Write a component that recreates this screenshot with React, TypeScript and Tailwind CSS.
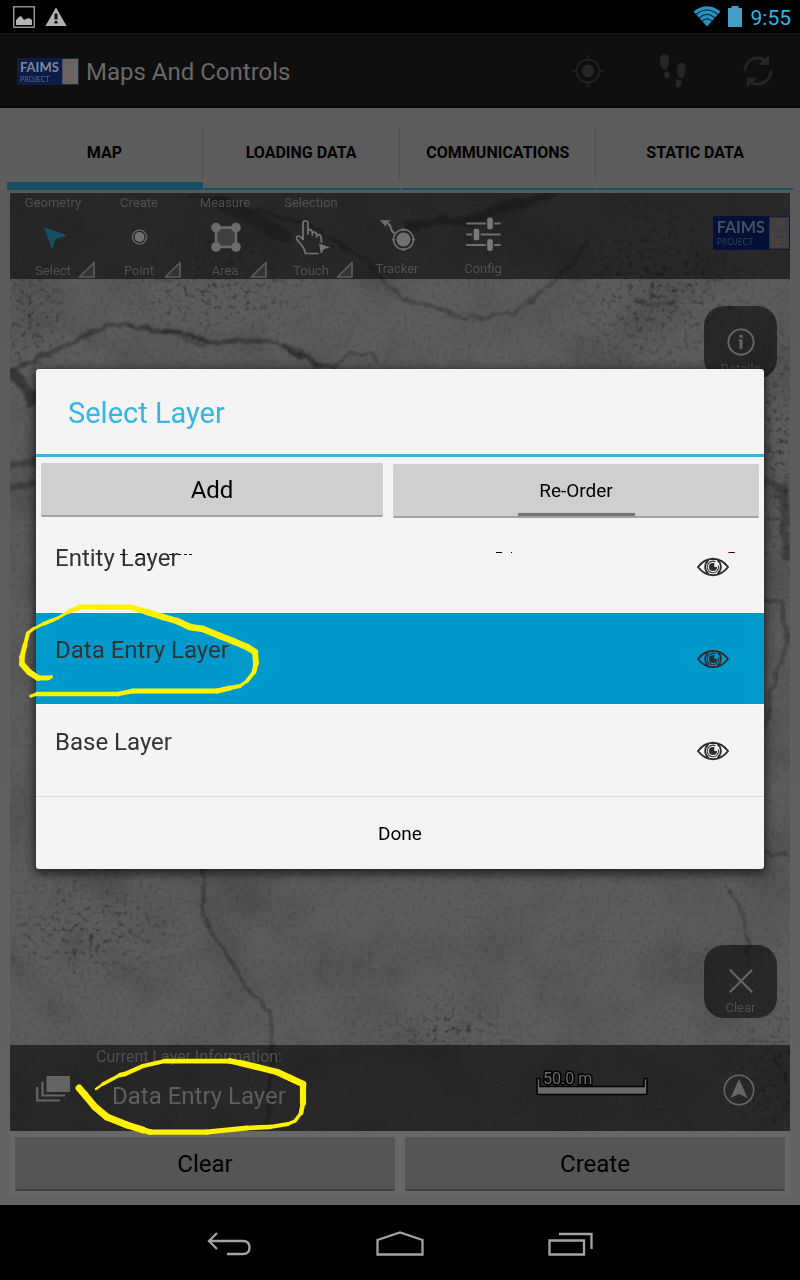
import { useState, type ReactNode } from 'react';

type IconProps = { className?: string };

function Logo({ className, ink, blue, paper, orange }: { className: string; ink: string; blue: string; paper: string; orange: string }) {
  return (
    <svg viewBox="0 0 62 27" className={className} role="img" aria-label="FAIMS Project">
      <rect width="45" height="27" fill={blue} />
      <rect x="45" y="0.5" width="16.5" height="26" fill={paper} stroke={blue} strokeWidth="0.6" />
      <text x="3" y="13.5" fill={ink} fontSize="13" fontWeight="700" fontFamily="Lato, sans-serif">FAIMS</text>
      <text x="3" y="23.5" fill={ink} opacity="0.7" fontSize="7" fontFamily="Lato, sans-serif">PROJECT</text>
      <g stroke={orange} strokeWidth="0.8" fill="none">
        <path d="M46.500 2.500h8v2h-7M47.500 7.500h7M55 3v4M57 2v5.500M48 13.500v11M48 13.500h12M51 18.500h8M51 18.500v5h3v-3h5v3M50 24h6" />
      </g>
    </svg>
  );
}

function PictureIcon({ className }: IconProps) {
  return (
    <svg viewBox="0 0 22 22" className={className} aria-hidden="true">
      <rect x="0.8" y="0.8" width="20.4" height="20.4" fill="none" stroke="#b4b4b4" strokeWidth="1.2" />
      <path d="M3 19v-5l3-3 2-1 3 4 2-1 3-1 3 2v5z" fill="#b4b4b4" />
    </svg>
  );
}

function WarningIcon({ className }: IconProps) {
  return (
    <svg viewBox="0 0 22 20" className={className} aria-hidden="true">
      <path d="M11 0.5 21.5 19H.5z" fill="#b4b4b4" />
      <path d="M9.5 6.5h3v6h-3zM9.5 14h3v2.6h-3z" fill="#111" />
    </svg>
  );
}

function WifiIcon({ className }: IconProps) {
  return (
    <svg viewBox="0 0 28 21" className={className} aria-hidden="true">
      <path d="M0.5 5.5Q14-5 27.500 5.500L14 20.500z" fill="#2b93bd" />
      <g fill="none" stroke="#04222f" strokeWidth="1.100">
        <path d="M3 8.500Q14-0.500 25 8.500M6 12Q14 4.500 22 12M9 15.200Q14 10.500 19 15.200" />
      </g>
    </svg>
  );
}

function BatteryIcon({ className }: IconProps) {
  return (
    <svg viewBox="0 0 14 21" className={className} aria-hidden="true">
      <path d="M3.500 0h7v2H14v19H0V2h3.500z" fill="#449fc6" />
    </svg>
  );
}

function TargetIcon({ className }: IconProps) {
  return (
    <svg viewBox="0 0 32 32" className={className} aria-hidden="true" fill="none" stroke="#252525" strokeWidth="1.600">
      <circle cx="16" cy="16" r="11.500" />
      <circle cx="16" cy="16" r="6.300" fill="#252525" stroke="none" />
      <path d="M16 0v5M16 27v5M0 16h5M27 16h5" />
    </svg>
  );
}

function StepsIcon({ className }: IconProps) {
  return (
    <svg viewBox="0 0 28 36" className={className} aria-hidden="true" fill="#252525">
      <path d="M5.500 1C9 1 10.500 5 10 10c-.4 4-1.500 6.500-3.700 7C3 17.500 1 12 1 7c0-3.500 2-6 4.500-6z" />
      <path d="M5 19.500l4.800-1.500c1.500 3 1.200 7-1.300 7.500-2.300.4-3.500-2-3.500-6z" />
      <path d="M22.500 9.500c-3.500.3-5 4.500-4.500 8.500.4 4 1 6.500 4 7.500 3 .6 4.500-5 4.500-10 0-3.500-1.500-6-4-6z" />
      <path d="M17.500 26l5.500 1.500c0 4-1.500 7-4 7-3 0-3-4-1.500-8.500z" />
    </svg>
  );
}

function SyncIcon({ className }: IconProps) {
  return (
    <svg viewBox="0 0 30 32" className={className} aria-hidden="true">
      <g fill="none" stroke="#252525" strokeWidth="3">
        <path d="M2 16C2 8 8 3 14 3c4 0 7 1 9 4M28 15c0 8-6 14-13 14-4 0-7-1-9-4" />
      </g>
      <path d="M26 0v10H15zM4 32V22.500h11z" fill="#252525" />
    </svg>
  );
}

function SelectIcon() {
  return (
    <svg viewBox="0 0 44 40" className="h-10 w-11" aria-hidden="true">
      <path d="M13 10 36.500 18.500 24.500 22 21 32.500z" fill="#164f63" />
    </svg>
  );
}

function PointIcon() {
  return (
    <svg viewBox="0 0 44 40" className="h-10 w-11" aria-hidden="true">
      <circle cx="22.500" cy="20" r="7" fill="none" stroke="#707070" strokeWidth="1.200" />
      <circle cx="22.500" cy="20" r="4.900" fill="#707070" />
    </svg>
  );
}

function AreaIcon() {
  return (
    <svg viewBox="0 0 44 40" className="h-10 w-11" aria-hidden="true">
      <rect x="13" y="10.500" width="20" height="19.500" fill="#404040" stroke="#6c6c6c" strokeWidth="2.500" />
      <g fill="#6c6c6c">
        <circle cx="13" cy="10.500" r="4.800" />
        <circle cx="33" cy="10.500" r="4.800" />
        <circle cx="13" cy="30" r="4.800" />
        <circle cx="33" cy="30" r="4.800" />
      </g>
    </svg>
  );
}

function TouchIcon() {
  return (
    <svg viewBox="0 0 44 40" className="h-10 w-11" aria-hidden="true">
      <path
        d="M16.500 36.500c-.5-3-1.500-5.500-4-8.500l-4.500-5.500c-1-1.500-.5-3.500 1.500-3.500 1.500 0 3 1.500 4.500 3.500V6.500c0-3.500 5-3.500 5 0V17v-4c2-1 4 0 4.300 2v3-2.500c2-1 4 0 4.300 2V20v-2c2-1 4 0 4.400 2l.5 5M16.500 36.500h12.500M19 13h2"
        fill="none" stroke="#747474" strokeWidth="1.700" strokeLinejoin="round" strokeLinecap="round"
      />
      <path d="M30 26.500l11 4-6 1.500-3 5z" fill="#747474" />
    </svg>
  );
}

function TrackerIcon() {
  return (
    <svg viewBox="0 0 44 40" className="h-10 w-11" aria-hidden="true" stroke="#707070" fill="none" strokeWidth="1.500">
      <path d="M5 5l11 .5-4.500 2.500-.5 4z" fill="#707070" stroke="none" />
      <path d="M12 8c4.500 1.500 3 5.500 5 8l2.500 2.500" strokeWidth="2" />
      <circle cx="28.500" cy="24.500" r="10" />
      <circle cx="28.500" cy="24.500" r="7" fill="#707070" stroke="none" />
      <path d="M28.500 13v3M28.500 33v3M17 24.500h3M37 24.500h3" />
    </svg>
  );
}

function ConfigIcon() {
  return (
    <svg viewBox="0 0 44 40" className="h-10 w-11" aria-hidden="true">
      <path d="M6 8.500h33M6 19.500h33M6 30h33" stroke="#707070" strokeWidth="1.800" strokeLinecap="round" />
      <g fill="#7a7a7a" stroke="#292929" strokeWidth="1.500">
        <rect x="25.500" y="2" width="7" height="13" rx="2.500" />
        <rect x="12" y="13" width="7" height="13" rx="2.500" />
        <rect x="25.500" y="23.500" width="7" height="13" rx="2.500" />
      </g>
    </svg>
  );
}

function EyeIcon() {
  return (
    <svg viewBox="0 0 32 20" className="h-5 w-8" aria-hidden="true" fill="none" stroke="#2b2d2f">
      <path d="M1 10Q7 2 16 1.700 25 2 31 10 25 18 16 18.300 7 18 1 10z" strokeWidth="1.900" />
      <path d="M11.500 3c-4.500 4-4.500 10 0 14M20.500 3c4.500 4 4.500 10 0 14" strokeWidth="1.700" />
      <path d="M18.500 4.800A5.800 5.800 0 1 0 21.500 8.500" strokeWidth="1.100" />
      <path d="M16 5.900a4.100 4.100 0 1 0 4.100 4.100l-3-.2.400-3.600z" fill="#2b2d2f" stroke="none" />
    </svg>
  );
}

const cracks: { d: string; w: number; o: number }[] = [
  { d: 'M10 372L38 357 62 348 84 335 112 325 140 326 158 332 180 332 205 342 240 342 270 340 290 350 318 364 335 368', w: 3, o: 0.5 },
  { d: 'M155 330L182 332 207 341 200 345 180 336z', w: 3, o: 0.4 },
  { d: 'M282 345L310 358 322 368', w: 6, o: 0.35 },
  { d: 'M335 366L352 353 370 354 380 362', w: 2, o: 0.4 },
  { d: 'M190 195L262 212 310 225 340 243 365 260 400 298 424 306 436 306 462 318 480 318 515 312 540 294 560 276 590 240', w: 2.5, o: 0.38 },
  { d: 'M405 228L440 220 470 222 500 208 530 202 555 190', w: 9, o: 0.38 },
  { d: 'M215 200L255 220 290 238', w: 14, o: 0.22 },
  { d: 'M10 372L24 384 34 405', w: 10, o: 0.5 },
  { d: 'M10 465L36 462M10 488L34 482', w: 6, o: 0.4 },
  { d: 'M203 869L204 912 212 932 228 956 245 985 262 1000 272 1020 274 1050 266 1130', w: 2.2, o: 0.5 },
  { d: 'M725 885L740 906 746 930 749 965', w: 2, o: 0.3 },
  { d: 'M764 600L782 602 788 640 772 690 765 730', w: 3, o: 0.4 },
  { d: 'M764 852L790 856', w: 3, o: 0.4 },
  { d: 'M764 480L784 490 786 560', w: 8, o: 0.25 },
  { d: 'M634 300L660 306 676 302', w: 3, o: 0.35 },
];

function Terrain() {
  return (
    <svg viewBox="10 193 780 938" preserveAspectRatio="xMidYMid slice" className="absolute inset-0 h-full w-full" aria-hidden="true">
      <defs>
        <filter id="mottle" x="0" y="0" width="100%" height="100%">
          <feTurbulence type="fractalNoise" baseFrequency="0.015" numOctaves="3" seed="7" />
          <feColorMatrix values="0 0 0 0 0  0 0 0 0 0  0 0 0 0 0  1.400 0 0 0 -0.600" />
        </filter>
        <filter id="grain" x="0" y="0" width="100%" height="100%">
          <feTurbulence type="fractalNoise" baseFrequency="0.25" numOctaves="2" seed="3" />
          <feColorMatrix values="0 0 0 0 0  0 0 0 0 0  0 0 0 0 0  1.200 0 0 0 -0.550" />
        </filter>
        <filter id="specks" x="0" y="0" width="100%" height="100%">
          <feTurbulence type="fractalNoise" baseFrequency="0.18" numOctaves="3" seed="11" />
          <feColorMatrix values="0 0 0 0 0  0 0 0 0 0  0 0 0 0 0  4 0 0 0 -2.200" />
        </filter>
        <filter id="rough" x="-20%" y="-20%" width="140%" height="140%">
          <feTurbulence type="fractalNoise" baseFrequency="0.09" numOctaves="3" seed="5" />
          <feDisplacementMap in="SourceGraphic" scale="9" xChannelSelector="R" yChannelSelector="G" />
          <feGaussianBlur stdDeviation="0.8" />
        </filter>
        <radialGradient id="fade">
          <stop offset="0" stopColor="#fff" />
          <stop offset="1" stopColor="#000" />
        </radialGradient>
        <mask id="patches">
          <g fill="url(#fade)">
            <ellipse cx="220" cy="290" rx="120" ry="60" />
            <ellipse cx="30" cy="320" rx="50" ry="80" />
            <ellipse cx="660" cy="290" rx="110" ry="110" />
            <ellipse cx="785" cy="440" rx="60" ry="160" />
            <ellipse cx="90" cy="930" rx="120" ry="70" />
            <ellipse cx="450" cy="1030" rx="90" ry="40" />
            <ellipse cx="780" cy="1070" rx="60" ry="90" />
          </g>
        </mask>
      </defs>
      <rect x="10" y="193" width="780" height="938" fill="#5c5c5c" />
      <rect x="10" y="193" width="780" height="938" filter="url(#mottle)" opacity="0.2" />
      <rect x="10" y="193" width="780" height="938" filter="url(#grain)" opacity="0.22" />
      <g mask="url(#patches)">
        <rect x="10" y="193" width="780" height="938" filter="url(#specks)" opacity="0.4" />
      </g>
      <g filter="url(#rough)" fill="none" stroke="#141414" strokeLinejoin="round">
        {cracks.map((c) => (
          <path key={c.d} d={c.d} strokeWidth={c.w} opacity={c.o} />
        ))}
      </g>
    </svg>
  );
}

type Tool = { group?: string; label: string; icon: ReactNode; more?: boolean };

const tools: Tool[] = [
  { group: 'Geometry', label: 'Select', icon: <SelectIcon />, more: true },
  { group: 'Create', label: 'Point', icon: <PointIcon />, more: true },
  { group: 'Measure', label: 'Area', icon: <AreaIcon />, more: true },
  { group: 'Selection', label: 'Touch', icon: <TouchIcon />, more: true },
  { label: 'Tracker', icon: <TrackerIcon /> },
  { label: 'Config', icon: <ConfigIcon /> },
];

function ToolButton({ tool }: { tool: Tool }) {
  return (
    <button type="button" className="relative flex h-[86px] w-[86px] flex-col items-center text-[13px] leading-5 text-[#505050]">
      <span className="h-5">{tool.group}</span>
      <span className="mt-1 mb-1">{tool.icon}</span>
      <span>{tool.label}</span>
      {tool.more && (
        <svg viewBox="0 0 18 18" className="absolute right-0 bottom-0 h-[18px] w-[18px]" aria-hidden="true">
          <path d="M16 1.500V16H1.500z" fill="#333" stroke="#5c5c5c" strokeWidth="1.700" strokeLinejoin="round" />
        </svg>
      )}
    </button>
  );
}

const strokes: [number, number, number][][] = [
  [
    [51, 677, 3], [48, 678, 4], [38, 678, 5], [29, 672, 6], [22, 664, 5], [22, 657, 5], [25, 645, 4], [28, 633, 3], [33, 629, 2.4], [43, 624, 2.7],
    [53, 620, 4], [58, 618, 2], [68, 612, 3], [80, 607, 4.700], [100, 607, 4.700], [130, 607, 5], [147, 612, 6], [163, 617, 6], [177, 621, 6],
    [190, 627, 6], [203, 629, 6], [220, 636, 6.300], [233, 641, 6], [247, 647, 6], [255, 652, 6], [256, 663, 5], [254, 672, 4], [247, 681, 2.700],
    [240, 686, 2.700], [230, 688, 4.500], [217, 691, 4.700], [133, 691, 4.700], [118, 694, 4], [37, 694, 4], [31, 696, 2],
  ],
  [
    [96, 1089, 1.500], [103, 1084, 2.500], [120, 1075, 4], [125, 1074, 4], [143, 1066, 3.500], [165, 1061, 4], [230, 1061, 4.700], [240, 1063, 6],
    [257, 1067, 6], [277, 1072, 6], [290, 1078, 6], [303, 1084, 6.500], [303, 1103, 5], [301, 1113, 3.500], [295, 1121, 2.700], [288, 1124, 3],
    [270, 1127, 4], [247, 1128, 4.700], [207, 1132, 4.700], [150, 1132, 5], [143, 1130, 6], [127, 1125, 6.500], [107, 1117, 6.500], [95, 1107, 6.500],
    [85, 1095, 6.500], [79, 1088, 6.500],
  ],
];

function Markup() {
  return (
    <svg viewBox="0 0 800 1280" className="pointer-events-none absolute top-0 left-0 z-20 h-[1280px] w-[800px]" aria-hidden="true">
      <g stroke="#fff200" strokeLinecap="round">
        {strokes.map((points) =>
          points.slice(1).map(([x, y, w], i) => (
            <line key={`${x}-${y}`} x1={points[i][0]} y1={points[i][1]} x2={x} y2={y} strokeWidth={(w + points[i][2]) / 2 + 0.4} />
          )),
        )}
      </g>
      <g shapeRendering="crispEdges" fill="#000">
        <path d="M120 554h5v1h-5zM136 554h8v1h-8zM147 554h3v1h-3zM169 554h4v1h-4zM178 554h3v1h-3zM184 554h3v1h-3zM189 554h3v1h-3zM496 552h6v1h-6zM511 552h1v1h-1zM730 552h4v1h-4z" />
        <path d="M125 554h3v1h-3zM728 552h2v1h-2zM734 552h1v1h-1z" fill="#c2187a" />
      </g>
    </svg>
  );
}

function MapPad({ label, children }: { label: string; children: ReactNode }) {
  return (
    <button type="button" className="flex h-[73px] w-[73px] flex-col items-center rounded-[20px] bg-black/55 pt-5 text-[13px] leading-5 text-[#505050]">
      {children}
      <span>{label}</span>
    </button>
  );
}

const layers = ['Entity Layer', 'Data Entry Layer', 'Base Layer'];
const tabs = ['MAP', 'LOADING DATA', 'COMMUNICATIONS', 'STATIC DATA'];

function LayerDialog({ selected, onSelect }: { selected: string; onSelect: (name: string) => void }) {
  return (
    <div className="absolute inset-0 z-10 flex items-center px-9">
      <section role="dialog" aria-labelledby="dialog-title" className="w-full overflow-hidden rounded-[3px] bg-[#f4f4f4] shadow-[0_3px_10px_2px_rgba(0,0,0,0.6)]">
        <h2 id="dialog-title" className="flex h-[88px] items-center border-b-3 border-[#33b5e5] px-8 pt-1 text-[29px] text-[#33b5e5]">Select Layer</h2>
        <div className="flex h-16 gap-2.5 px-[5px] text-black">
          <button type="button" className="mt-1.5 h-[54px] flex-[342] rounded-[2px] border-b-2 border-[#a2a2a2] bg-[#cfcfcf] pt-0.5 text-2xl">Add</button>
          <button type="button" className="mt-[7px] flex h-[54px] flex-[366] items-end justify-center rounded-[2px] border-b-2 border-[#a2a2a2] bg-[#cfcfcf] text-[19px]">
            <span className="flex h-[50px] w-[117px] items-center justify-center border-b-3 border-[#747474] pt-1">Re-Order</span>
          </button>
        </div>
        <ul className="text-[#333]">
          {layers.map((name) => (
            <li
              key={name}
              className={`flex h-23 items-center border-b pr-[35px] pl-[19px] last:border-[#d8d8d8] ${name === selected ? 'border-white bg-[#0099cc]' : 'border-white'}`}
            >
              <button type="button" onClick={() => onSelect(name)} className="h-full flex-1 pb-[18px] text-left text-2xl">{name}</button>
              <button type="button" aria-label={`Toggle ${name}`}><EyeIcon /></button>
            </li>
          ))}
        </ul>
        <button type="button" className="h-18 w-full pt-0.5 text-[19px] text-black">Done</button>
      </section>
    </div>
  );
}

export default function App() {
  const [layer, setLayer] = useState('Data Entry Layer');

  return (
    <div className="relative flex min-h-screen flex-col overflow-hidden bg-black font-['Roboto',sans-serif]">
      <div className="flex h-[33px] items-center justify-between bg-black pr-[9px] pl-[13px]">
        <div className="flex items-center gap-2.5">
          <PictureIcon className="h-[22px] w-[22px]" />
          <WarningIcon className="h-5 w-[22px]" />
        </div>
        <div className="flex items-center gap-[7px]">
          <WifiIcon className="h-[21px] w-7" />
          <BatteryIcon className="h-[21px] w-3.5" />
          <span className="ml-0.5 pt-0.5 text-[21px] leading-8 text-[#33b5e5]">9:55</span>
        </div>
      </div>

      <main className="relative flex flex-1 flex-col bg-linear-to-b from-[#595959] to-[#636363]">
        <header className="flex h-[75px] items-center border-t border-b-2 border-t-[#191919] border-b-[#0a0a0a] bg-[#0f0f0f] pt-0.5 pl-[17px]">
          <Logo className="h-[27px] w-[62px]" ink="#7f879a" blue="#0c1c47" paper="#66666a" orange="#7d5a38" />
          <h1 className="ml-[7px] flex-1 pt-0.5 text-2xl text-[#686868]">Maps And Controls</h1>
          <button type="button" aria-label="Locate" className="flex w-[85px] justify-center"><TargetIcon className="h-8 w-8" /></button>
          <button type="button" aria-label="Path tracking" className="flex w-[85px] justify-center"><StepsIcon className="h-9 w-7" /></button>
          <button type="button" aria-label="Sync" className="flex w-[85px] justify-center"><SyncIcon className="h-8 w-[30px]" /></button>
        </header>

        <nav className="mb-[3px] grid h-[82px] grid-cols-4 bg-[#5c5c5c] pr-[7px] pl-1.5">
          {tabs.map((tab, i) => (
            <button key={tab} type="button" className="flex flex-col justify-end pt-[18px] pl-px text-base font-bold text-black">
              <span className={`flex w-full flex-1 items-center justify-center ${i === 3 ? '' : 'border-r border-[#4e4e4e]'}`}>{tab}</span>
              <span className={`w-full bg-[#164f63] ${i === 0 ? 'mt-[3px] h-2' : 'mt-[9px] h-0.5'}`} />
            </button>
          ))}
        </nav>

        <div className="mx-2.5 mb-2.5 flex flex-1 flex-col bg-[#676767]">
          <div className="relative flex flex-1 flex-col justify-between overflow-hidden">
            <Terrain />
            <div className="relative flex items-start bg-black/55">
              {tools.map((tool) => (
                <ToolButton key={tool.label} tool={tool} />
              ))}
              <Logo className="mt-[23px] ml-auto h-[34px] w-[77px]" ink="#48505f" blue="#020f36" paper="#3d3f48" orange="#634426" />
            </div>
            <div className="relative flex flex-1 flex-col items-end justify-between py-[27px] pr-[13px]">
              <MapPad label="Details">
                <svg viewBox="0 0 32 34" className="h-[34px] w-8" aria-hidden="true">
                  <circle cx="16" cy="16.500" r="13" fill="none" stroke="#666" strokeWidth="2" />
                  <path d="M14.500 9h3.200v3h-3.200zM13.500 14h4v9.500h-3V15.500h-1z" fill="#666" />
                </svg>
              </MapPad>
              <MapPad label="Clear">
                <svg viewBox="0 0 32 34" className="h-[34px] w-8" aria-hidden="true">
                  <path d="M4.500 5 27.500 28M27.500 5 4.500 28" stroke="#666" strokeWidth="2.200" />
                </svg>
              </MapPad>
            </div>
            <div className="relative flex h-[86px] items-start bg-black/55">
              <button type="button" aria-label="Layers" className="flex h-[88px] w-[86px] items-center justify-center">
                <svg viewBox="0 0 34 26" className="h-[26px] w-[34px]" aria-hidden="true">
                  <path d="M10.500 0H34v16H10.500z" fill="#646464" />
                  <path d="M6.500 6v13.500H29M1.200 11v13.500H24" fill="none" stroke="#646464" strokeWidth="2.200" />
                </svg>
              </button>
              <div>
                <p className="pt-0.5 text-base leading-5 text-[#505050]">Current Layer Information:</p>
                <p className="mt-[13px] pl-4 text-2xl leading-8 text-[#5e5e5e]">{layer}</p>
              </div>
              <svg viewBox="0 0 114 28" className="mt-6 ml-auto h-7 w-[114px]" role="img" aria-label="Scale 50.0 m">
                <path d="M2 9.500v16h110v-16h-3v8H5v-8z" fill="#6a6a6a" stroke="#000" strokeWidth="1.500" />
                <text x="8" y="15" fontSize="16" fontFamily="Roboto, sans-serif" fill="#6a6a6a" stroke="#000" strokeWidth="3" paintOrder="stroke">50.0 m</text>
              </svg>
              <button type="button" aria-label="North" className="mr-[15px] ml-[53px] flex h-[90px] w-[73px] items-center justify-center">
                <svg viewBox="0 0 32 32" className="h-8 w-8" aria-hidden="true">
                  <circle cx="16" cy="16" r="14.700" fill="none" stroke="#666" strokeWidth="1.600" />
                  <path d="M16 5 24.500 24 16 20 7.500 24z" fill="#666" />
                </svg>
              </button>
            </div>
          </div>
          <div className="grid grid-cols-2 gap-2.5 px-[5px] pt-1.5 pb-1 text-2xl text-black">
            <button type="button" className="h-[54px] rounded-[2px] border-b-2 border-[#404040] bg-[#555] pt-0.5">Clear</button>
            <button type="button" className="h-[54px] rounded-[2px] border-b-2 border-[#404040] bg-[#555] pt-0.5">Create</button>
          </div>
        </div>

        <LayerDialog selected={layer} onSelect={setLayer} />
      </main>

      <nav className="flex h-[75px] items-center justify-center gap-[123px] bg-black pt-1">
        <button type="button" aria-label="Back">
          <svg viewBox="0 0 46 28" className="h-7 w-[46px]" fill="none" stroke="#a3a3a3" strokeWidth="2.300" aria-hidden="true">
            <path d="M11 2 3 10l8 8M3 10h34q6.500 0 6.500 6.500T37 23H21" />
          </svg>
        </button>
        <button type="button" aria-label="Home">
          <svg viewBox="0 0 50 28" className="h-7 w-[50px]" fill="none" stroke="#a3a3a3" strokeWidth="2.300" aria-hidden="true">
            <path d="M2.500 23.500V9L25 1.500 47.500 9v14.500z" />
          </svg>
        </button>
        <button type="button" aria-label="Recent apps">
          <svg viewBox="0 0 46 28" className="h-7 w-[46px]" fill="none" stroke="#a3a3a3" strokeWidth="2.300" aria-hidden="true">
            <path d="M1.500 9.500h34.500v14H1.500zM11 3h32.500v15" />
          </svg>
        </button>
      </nav>

      <Markup />
    </div>
  );
}
